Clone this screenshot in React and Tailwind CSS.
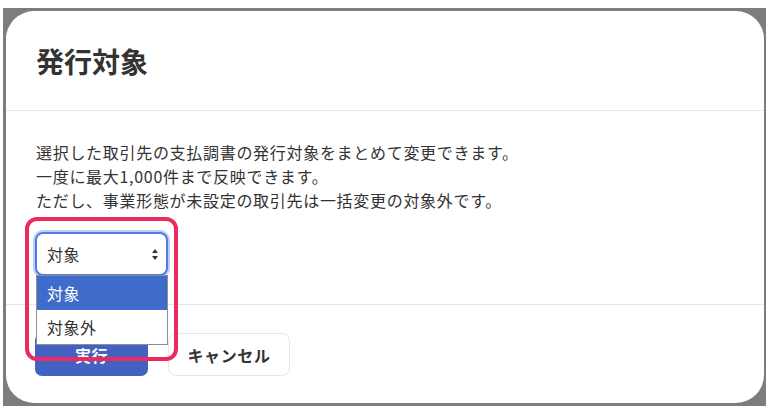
export default function App() {
  return (
    <div
      className="w-[769px] h-[410px] bg-white overflow-hidden"
      style={{ fontFamily: '"Noto Sans CJK JP", "Noto Sans", sans-serif' }}
    >
      {/* Gray backdrop frame */}
      <div className="ml-[3px] mt-[8px] w-[763px] h-[398px] bg-[#7d7d7d] pt-[3px] pl-[3px] pr-[2px] pb-[3px]">
        {/* Modal */}
        <div className="h-full bg-white rounded-[28px] flex flex-col text-[#333]">
          {/* Header */}
          <div className="h-[100px] shrink-0 flex items-center px-[30px] border-b border-[#e6e6e6]">
            <h1 className="text-[28px] font-bold leading-none text-[#333]">発行対象</h1>
          </div>

          {/* Body */}
          <div className="pt-[29px] pb-[28px] px-[29px] border-b border-[#e6e6e6]">
            <div className="pl-[1px] text-[16px] leading-[24px] tracking-[0.7px] text-[#333]">
              <p>選択した取引先の支払調書の発行対象をまとめて変更できます。</p>
              <p>一度に最大1,000件まで反映できます。</p>
              <p>ただし、事業形態が未設定の取引先は一括変更の対象外です。</p>
            </div>

            <div className="relative mt-[20px] w-[133px]">
              {/* Focused select */}
              <div className="h-[44px] rounded-[8px] border-2 border-[#4e7ce4] shadow-[0_0_0_2px_#bcd0f6] bg-white flex items-center justify-between pl-[10px] pr-[8px]">
                <span className="text-[16px] tracking-[0.5px] text-[#333]">対象</span>
                <svg width="6" height="11" viewBox="0 0 6 11" className="mt-[1px]">
                  <path d="M3 0 L6 4 L0 4 Z" fill="#333" />
                  <path d="M0 7 L6 7 L3 11 Z" fill="#333" />
                </svg>
              </div>

              {/* Open option list */}
              <div className="absolute left-[1px] top-[43px] w-[132px] z-10 bg-white border border-[#8f8f8f]">
                <div className="h-[34px] flex items-center pl-[10px] bg-[#3f6bca] text-white text-[16px] tracking-[0.5px]">対象</div>
                <div className="h-[34px] flex items-center pl-[10px] bg-white text-[#333] text-[16px] tracking-[0.5px]">対象外</div>
              </div>

              {/* Annotation highlight */}
              <div className="absolute -left-[10px] -top-[15px] w-[153px] h-[144px] z-20 border-4 border-[#ec2a5d] rounded-[12px] pointer-events-none" />
            </div>
          </div>

          {/* Footer */}
          <div className="flex items-start gap-[20px] pt-[28px] px-[29px]">
            <button className="w-[113px] h-[43px] rounded-[7px] bg-[#4262c2] text-white text-[16px] font-bold tracking-[0.5px]">
              実行
            </button>
            <button className="w-[122px] h-[43px] rounded-[8px] bg-white border border-[#e6e6e6] text-[#333] text-[16px] font-bold tracking-[0.6px]">
              キャンセル
            </button>
          </div>
        </div>
      </div>
    </div>
  );
}
